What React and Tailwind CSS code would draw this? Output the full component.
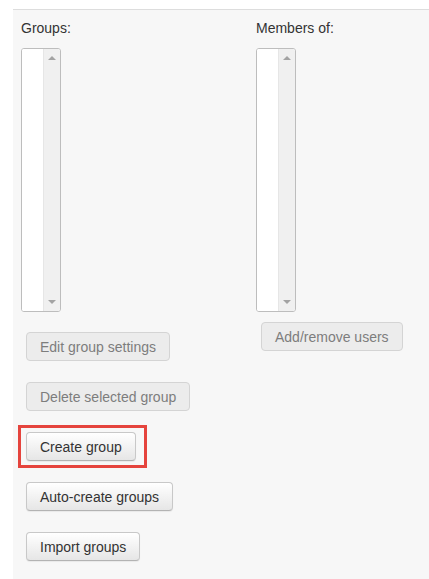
import React from 'react';

const font = { fontFamily: '"Liberation Sans", Arial, sans-serif' };

function ListBox() {
  return (
    <div className="flex w-[40px] h-[264px] rounded-[3px] border border-[#bdbdbd] bg-white overflow-hidden">
      <div className="flex-1 bg-white" />
      <div className="w-[17px] flex flex-col justify-between items-center bg-[#f0f0f0] border-l border-[#e6e6e6] py-[7px]">
        <span className="block w-0 h-0 border-l-[4px] border-r-[4px] border-b-[4px] border-l-transparent border-r-transparent border-b-[#a3a3a3]" />
        <span className="block w-0 h-0 border-l-[4px] border-r-[4px] border-t-[4px] border-l-transparent border-r-transparent border-t-[#a3a3a3]" />
      </div>
    </div>
  );
}

function Btn({ children, disabled }) {
  if (disabled) {
    return (
      <button
        disabled
        className="h-[29px] px-[13px] rounded-[4px] border border-[#d4d4d4] bg-[#ececec] text-[14px] text-[#7d7d7d] leading-none"
      >
        {children}
      </button>
    );
  }
  return (
    <button className="h-[29px] px-[13px] rounded-[4px] border border-[#c8c8c8] border-b-[#b3b3b3] bg-gradient-to-b from-white to-[#e6e6e6] text-[14px] text-[#333] leading-none shadow-[0_1px_1px_rgba(0,0,0,0.06)]">
      {children}
    </button>
  );
}

export default function App() {
  return (
    <div className="w-[429px] h-[579px] bg-white pt-[9px] pl-[13px] overflow-hidden" style={font}>
      <div className="h-[570px] bg-[#f7f7f7] border-t border-[#dddddd] pl-[8px] pt-[8px] flex">
        {/* Groups column */}
        <div className="w-[235px] flex flex-col items-start">
          <div className="h-[20px] leading-[20px] text-[14px] text-[#333]">Groups:</div>
          <div className="mt-[10px]">
            <ListBox />
          </div>
          <div className="mt-[20px] ml-[5px] flex flex-col items-start gap-[21px]">
            <Btn disabled>Edit group settings</Btn>
            <Btn disabled>Delete selected group</Btn>
            <div className="relative">
              <Btn>Create group</Btn>
              <span className="absolute left-[-8px] top-[-7px] w-[129px] h-[43px] border-[3px] border-[#e5443d] pointer-events-none" />
            </div>
            <Btn>Auto-create groups</Btn>
            <Btn>Import groups</Btn>
          </div>
        </div>

        {/* Members column */}
        <div className="flex flex-col items-start">
          <div className="h-[20px] leading-[20px] text-[14px] text-[#333]">Members of:</div>
          <div className="mt-[10px]">
            <ListBox />
          </div>
          <div className="mt-[10px] ml-[5px]">
            <Btn disabled>Add/remove users</Btn>
          </div>
        </div>
      </div>
    </div>
  );
}
